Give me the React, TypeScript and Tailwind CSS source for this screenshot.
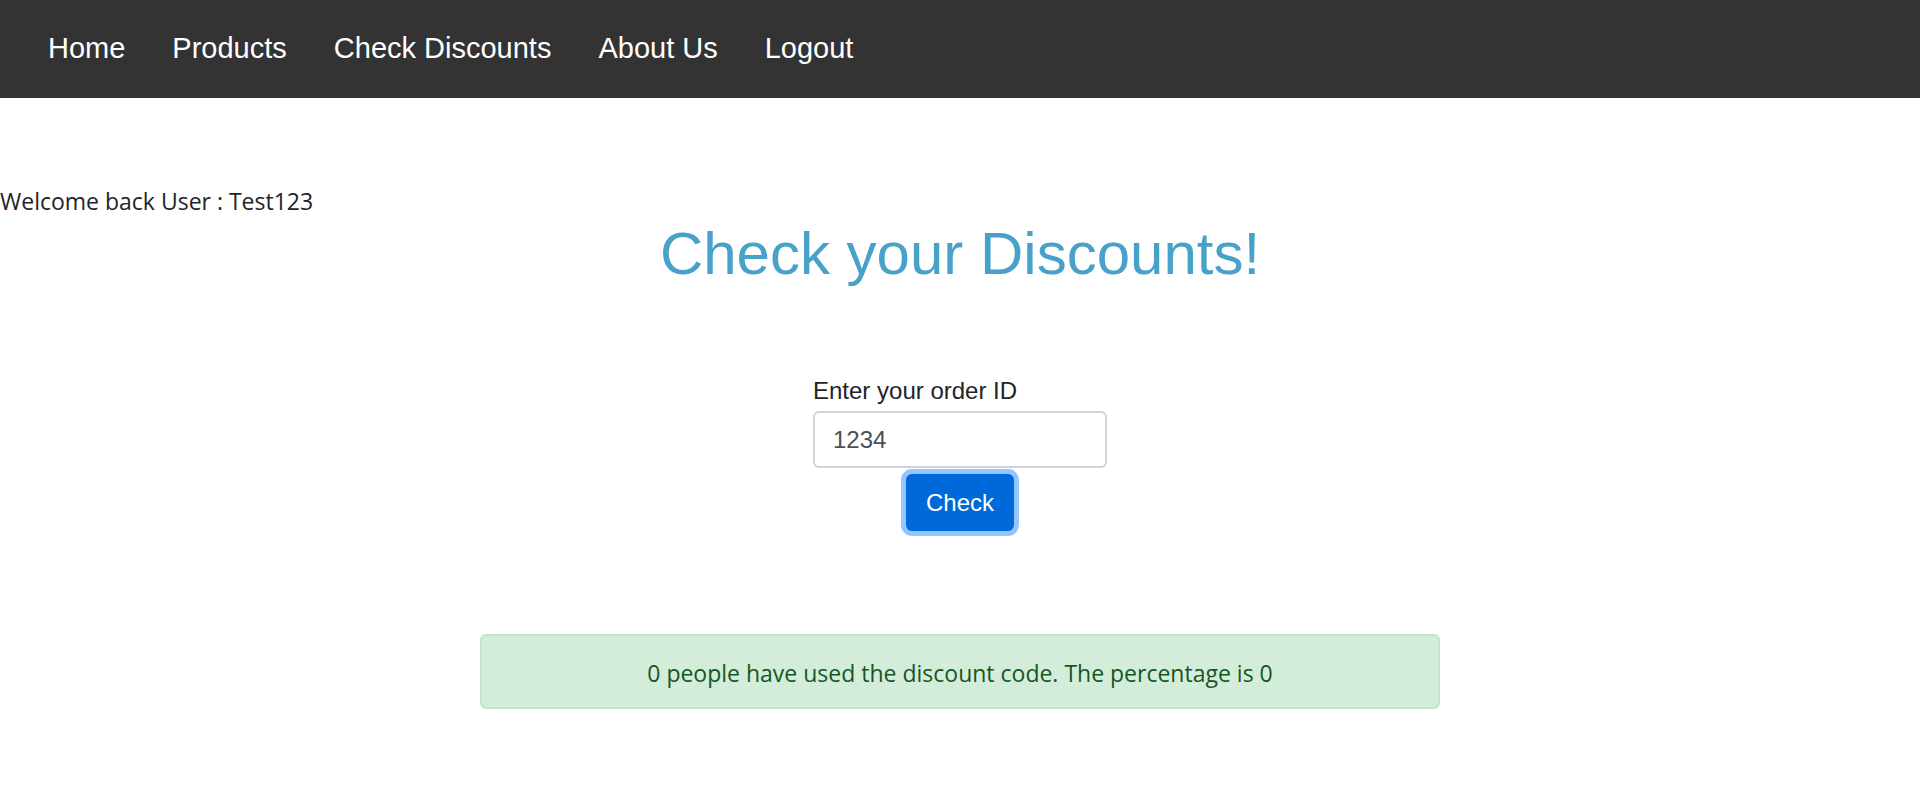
import { useState } from "react";

const links = ["Home", "Products", "Check Discounts", "About Us", "Logout"];

export default function App() {
  const [orderId, setOrderId] = useState("1234");
  return (
    <div className="bg-white font-['Liberation_Sans',Arial,sans-serif] text-2xl text-[#212529]">
      <nav className="bg-[#333333] px-12 pt-[23px] pb-[25px]">
        <ul className="flex flex-wrap gap-x-[47px]">
          {links.map((label) => (
            <li key={label}>
              <a href="#" className="block text-[29px] leading-[50px] text-white">
                {label}
              </a>
            </li>
          ))}
        </ul>
      </nav>
      <main className="flex flex-col items-center pt-[85px]">
        <p className="self-start font-['Open_Sans','Noto_Sans',sans-serif] text-[23px] leading-9">
          Welcome back User : Test123
        </p>
        <h1 className="text-center text-[60px] leading-[70px] text-[#47a1c9]">Check your Discounts!</h1>
        <form className="flex w-[294px] flex-col items-center pt-[84px]" onSubmit={(e) => e.preventDefault()}>
          <label htmlFor="order-id" className="self-start leading-9">
            Enter your order ID
          </label>
          <input
            id="order-id"
            type="text"
            value={orderId}
            onChange={(e) => setOrderId(e.target.value)}
            className="mt-[2px] h-[57px] w-full rounded-md border-2 border-[#ced4da] bg-white px-[18px] text-[#495057] outline-none"
          />
          <button
            type="submit"
            className="mt-[6px] h-[57px] rounded-md bg-[#0069d9] px-5 text-white ring-[5px] ring-[#93c5ff]"
          >
            Check
          </button>
        </form>
        <div
          role="alert"
          className="mt-[103px] w-1/2 rounded-md border-2 border-[#c3e6cb] bg-[#d4edda] px-6 pt-[19px] pb-4 text-center font-['Open_Sans','Noto_Sans',sans-serif] text-[23px] leading-9 text-[#155724]"
        >
          0 people have used the discount code. The percentage is 0
        </div>
      </main>
    </div>
  );
}
